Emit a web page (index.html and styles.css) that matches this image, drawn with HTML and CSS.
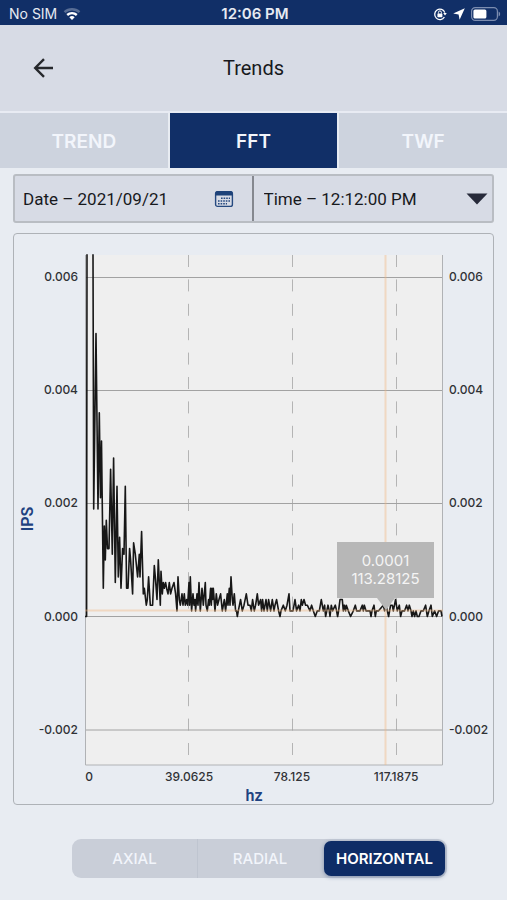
FILE: index.html
```html
<!DOCTYPE html>
<html lang="en">

<head>
  <meta charset="UTF-8">
  <meta name="viewport" content="width=device-width, initial-scale=1.0">
  <title>Trends</title>
  <link rel="stylesheet" href="styles.css">
</head>

<body>
  <div class="status-bar">
    <div class="status-left">
      <span>No SIM</span>
      <svg width="18" height="14" viewBox="0 0 18 14" fill="none" stroke="#fff" stroke-width="2.4" aria-hidden="true">
        <path d="M1.5 5.2a11 11 0 0 1 15 0" opacity="0.3" />
        <path d="M4.2 8a7.2 7.2 0 0 1 9.6 0" />
        <path d="M9 13 6.3 10.3a4 4 0 0 1 5.4 0z" fill="#fff" stroke="none" />
      </svg>
    </div>
    <span class="clock">12:06 PM</span>
    <div class="status-right">
      <svg width="14" height="14" viewBox="0 0 14 14" fill="none" stroke="#fff" stroke-width="1.3" aria-hidden="true">
        <path d="M11.8 5.6A5.2 5.2 0 1 0 11.4 10" />
        <path d="M10.2 6h3.6l-1.8 2.6z" fill="#fff" stroke="none" />
        <rect x="4.4" y="6.4" width="5" height="3.8" rx="0.6" fill="#fff" stroke="none" />
        <path d="M5.4 6.6V5.4a1.5 1.5 0 0 1 3 0v1.2" stroke-width="1" />
      </svg>
      <svg width="12" height="12" viewBox="0 0 12 12" fill="#fff" aria-hidden="true">
        <path d="M11.8 0.2 0.2 5.4l5.4 1.2 1 5.2z" />
      </svg>
      <svg width="30" height="14" viewBox="0 0 30 14" aria-hidden="true">
        <rect x="0.6" y="0.6" width="25.8" height="12.8" rx="3.6" fill="none" stroke="#7c8db0" stroke-width="1.2" />
        <rect x="2.4" y="2.4" width="13" height="9.2" rx="1.6" fill="#fff" />
        <path d="M27.6 4.6a2.6 2.6 0 0 1 0 4.8z" fill="#7c8db0" />
      </svg>
    </div>
  </div>

  <header>
    <button class="back" type="button" aria-label="Back">
      <svg width="22" height="20" viewBox="0 0 22 20" fill="none" stroke="#26282c" stroke-width="2.4" aria-hidden="true">
        <path d="M20 10H2.500M11 1.200 2.200 10l8.800 8.800" />
      </svg>
    </button>
    <h1>Trends</h1>
  </header>

  <nav class="tabs">
    <button type="button">TREND</button>
    <button type="button" class="active">FFT</button>
    <button type="button">TWF</button>
  </nav>

  <main>
    <div class="filters">
      <button class="date" type="button">
        <span>Date – 2021/09/21</span>
        <svg width="20" height="18" viewBox="0 0 20 18" aria-hidden="true">
          <rect x="1.6" y="1.6" width="16.8" height="14.8" rx="2" fill="none" stroke="#264a80" stroke-width="1.4" />
          <path d="M1.4 5.6V3a2 2 0 0 1 2-2h13.2a2 2 0 0 1 2 2v2.6z" fill="#1d4279" />
          <path d="M7 8.300h9M4 11h12M4 13.700h9" stroke="#264a80" stroke-width="1.4" stroke-dasharray="1.6 1" />
        </svg>
      </button>
      <div class="time">
        <select aria-label="Time">
          <option>Time – 12:12:00 PM</option>
        </select>
        <svg width="22" height="12" viewBox="0 0 22 12" aria-hidden="true">
          <path d="M0.500 0.500h21L11 11.500z" fill="#272a3a" />
        </svg>
      </div>
    </div>

    <div class="chart">
      <svg viewBox="0 0 479 570" role="img" aria-label="FFT spectrum, IPS against hz">
        <rect class="plot" x="71" y="21" width="358" height="510" />

        <!-- Grid -->
        <path class="grid-v" d="M174.500 21V531M278.500 21V531M382.500 21V531" />
        <path class="grid-h" d="M71 43.500H429M71 156.500H429M71 269.500H429M71 382.500H429M71 496H429" />
        <path class="frame" d="M71.500 21V531H428.500V21" />

        <!-- Spectrum, one y unit is 0.0001 IPS -->
        <g transform="translate(71 382.500) scale(1 -5.660)">
          <polyline class="spectrum" points="0,0 1.6,0 2,64" />
          <polyline class="spectrum" points="8,64 8.7,19 11,50 13,19 14.300,36 15.500,21 16.500,31 18.300,5 19.300,16 20.300,10 21.300,17 22.500,12 24,12 25.600,26 27.300,11 28.600,28 30.300,6 32,23 33.300,7 34.600,14 36,5 37.600,12 39,11 40.300,23 41.600,5 43,5 44.600,12 45.600,10 47.600,4 48.600,13 50.300,11 52.600,7 54.300,11 55,7 56.600,15 58.300,4 59.300,5 61.300,2 62.300,3 63.600,7 65.300,2 67.600,2 69.300,9 70.300,7 72,3 73.300,10 74.300,6 75.300,2 76,8 77.300,4 78.300,6 79.300,5 80.600,6 81.600,5 83,4 84.300,6 85.600,4 87,5 89,6 90.600,4 92,1 93,7 94.300,3 95.300,2 97,4 98,2 99.300,4 100.300,2 101.600,3 102.600,2 104,6 104.600,2 105.300,7 106.600,1 108,4 109,2 110,3 110.600,1 112,4 113,2 114,6 115.300,1 117,5 118.300,2 120.300,6 121,2 122.300,1 123.600,3 124.300,2 125.600,5 126.300,2 127,5 127.600,3 128.300,5 130,1 131.300,4 132.600,2 134,3 135.600,4 137.300,1 139.300,3 140.600,1 142.300,4 143,2 144.300,5 145,2 146,7 147.300,3 148,2 149.300,4 150.600,1 151.600,1 152.300,0 153.300,1 155.600,3 157.300,1 159,2 161.300,4 163,2 165,2 166.300,1 167.600,3 169.300,1 170.600,2 172.300,4 173.600,2 175.600,3 176.600,1 177.600,3 179,1 181,3 182.300,1 183.600,3 185.600,1 187.300,3 189,1 190,2 191.600,3 193.600,1 195,0 196,1 198.300,2 200.300,1 202,2 204,4 205,1 208,1 210,3 211.600,1 213.600,2 215,1 216.300,3 217.300,2 219,3 220.600,2 222.300,2 225,1 226.600,2 228.300,1 230.300,0 232.300,1 234.300,1 236.300,3 238.300,1 239.600,2 240.600,0 243,2 244.300,1 245,0 246.300,2 247.600,1 250.300,2 251.600,1 252.600,0 253.600,1 255,3 257.300,3 258.300,1 259.300,2 260.600,1 261.300,2 263.300,1 265.600,0 268.300,1 270.300,2 271.600,1 275,1 277.300,2 278.300,1 279.300,2 281,1 285,1 286,0 287,1 289,2 290.300,0 291.300,1 293.600,1 298.300,2 299.600,1 301,2 302.300,1 303.600,0 305.600,2 307.300,2 308.300,1 310.600,3 312.300,1 314.300,2 315.600,0 317,1 319.600,1 321.600,2 323,1 324.300,2 326,1 327,0 328.300,1 329.600,0 331,1 332.300,0 334,0 336,1 338.300,1 340.600,2 342.300,0 344,1 346,2 347.300,0 349.600,1 351.600,0 353.600,1 356,1 357,0" />
        </g>

        <!-- Crosshair -->
        <path class="cross" d="M71 376.500H429M371.500 21V531" />

        <!-- Tooltip -->
        <path class="tip" d="M323 308h97v56h-39l-9 12-9-12h-40z" />
        <text class="tip-text" x="371.500" y="332">0.0001</text>
        <text class="tip-text" x="371.500" y="350">113.28125</text>

        <g class="label end">
          <text x="64" y="47">0.006</text>
          <text x="64" y="160">0.004</text>
          <text x="64" y="273">0.002</text>
          <text x="64" y="387">0.000</text>
          <text x="64" y="500">-0.002</text>
        </g>
        <g class="label">
          <text x="435" y="47">0.006</text>
          <text x="435" y="160">0.004</text>
          <text x="435" y="273">0.002</text>
          <text x="435" y="387">0.000</text>
          <text x="435" y="500">-0.002</text>
        </g>
        <g class="label middle">
          <text x="75" y="547">0</text>
          <text x="175" y="547">39.0625</text>
          <text x="278" y="547">78.125</text>
          <text x="382" y="547">117.1875</text>
        </g>
        <text class="axis" transform="translate(19 285) rotate(-90)">IPS</text>
        <text class="axis" x="240" y="567">hz</text>
      </svg>
    </div>

    <div class="segments">
      <button type="button">AXIAL</button>
      <button type="button">RADIAL</button>
      <button type="button" class="active">HORIZONTAL</button>
    </div>
  </main>
</body>

</html>
```

FILE: styles.css
```css
/* Globals */
* {
  box-sizing: border-box;
  margin: 0;
}

body {
  font-family: Inter, 'Liberation Sans', sans-serif;
  background: #e8ecf2;
  color: #17191d;
}

button,
select {
  font: inherit;
  color: inherit;
  background: none;
  border: 0;
  padding: 0;
  cursor: pointer;
}

svg {
  display: block;
}

/* Status bar */
.status-bar {
  display: grid;
  grid-template-columns: 1fr auto 1fr;
  align-items: center;
  height: 25px;
  padding: 2px 6px 0 9px;
  background: #112f67;
  color: #e6eaf2;
  font-size: 14px;
}

.status-left,
.status-right {
  display: flex;
  align-items: center;
  gap: 6px;
}

.status-right {
  justify-content: flex-end;
}

.clock {
  font-size: 15px;
  font-weight: 600;
}

/* Header */
header {
  display: grid;
  grid-template-columns: 22px 1fr 22px;
  align-items: center;
  height: 88px;
  padding: 0 33px;
  background: #d7dbe5;
  border-bottom: 2px solid #e8ebf3;
}

h1 {
  font: 400 20px Roboto, sans-serif;
  text-align: center;
}

/* Tabs */
.tabs {
  display: grid;
  grid-template-columns: repeat(3, 1fr);
  gap: 2px;
}

.tabs button {
  height: 55px;
  padding-top: 2px;
  background: #cdd3de;
  color: #f2f5fb;
  font-size: 19px;
  font-weight: 600;
}

.tabs .active {
  background: #112f67;
}

/* Filters */
main {
  padding: 6px 13px 22px;
}

.filters {
  display: grid;
  grid-template-columns: 1fr 1fr;
  height: 49px;
  border: 2px solid #b9bdc3;
  border-radius: 3px;
  background: #d7dbe5;
  font: 17px Roboto, sans-serif;
}

.date {
  display: flex;
  align-items: center;
  justify-content: space-between;
  padding: 0 18px 0 8px;
  border-right: 2px solid #85888f;
}

.time {
  position: relative;
}

.time select {
  appearance: none;
  width: 100%;
  height: 100%;
  padding: 0 32px 0 10px;
}

.time svg {
  position: absolute;
  right: 4px;
  top: 17px;
  pointer-events: none;
}

/* Chart */
.chart {
  margin-top: 10px;
  border: 1px solid #aeb2b7;
  border-radius: 4px;
}

.chart svg {
  width: 100%;
}

.plot {
  fill: #efefef;
}

.grid-v,
.grid-h,
.frame,
.cross {
  fill: none;
  stroke: #b4b4b4;
}

.grid-v {
  stroke-dasharray: 12 12.400;
}

.grid-h {
  stroke: #a2a2a2;
}

.frame {
  stroke: #b0b2b5;
}

.spectrum {
  fill: none;
  stroke: #171717;
  stroke-width: 1.600;
  stroke-linejoin: round;
  vector-effect: non-scaling-stroke;
}

.cross {
  stroke: #f3b77f;
  stroke-width: 2;
  opacity: 0.4;
}

.tip {
  fill: #b7b7b7;
}

.tip-text {
  fill: #f4f4f4;
  font-size: 15px;
  text-anchor: middle;
}

.label {
  fill: #303236;
  font-size: 12px;
  font-weight: 500;
}

.end {
  text-anchor: end;
}

.middle {
  text-anchor: middle;
}

.axis {
  fill: #1f4280;
  font: 600 16px Roboto, sans-serif;
  text-anchor: middle;
}

/* Axis direction switch */
.segments {
  display: grid;
  grid-template-columns: repeat(3, 1fr);
  height: 39px;
  margin: 34px 47px 0 59px;
  border-radius: 9px;
  background: #c9ced8;
  color: #f2f5fb;
  font-size: 15px;
  font-weight: 500;
}

.segments button + button:not(.active) {
  border-left: 1px solid #bfc5d0;
}

.segments .active {
  margin: 2px;
  border-radius: 7px;
  background: #0e2c66;
  color: #fff;
  font-weight: 600;
  box-shadow: 0 1px 4px #112f6766;
}
```
